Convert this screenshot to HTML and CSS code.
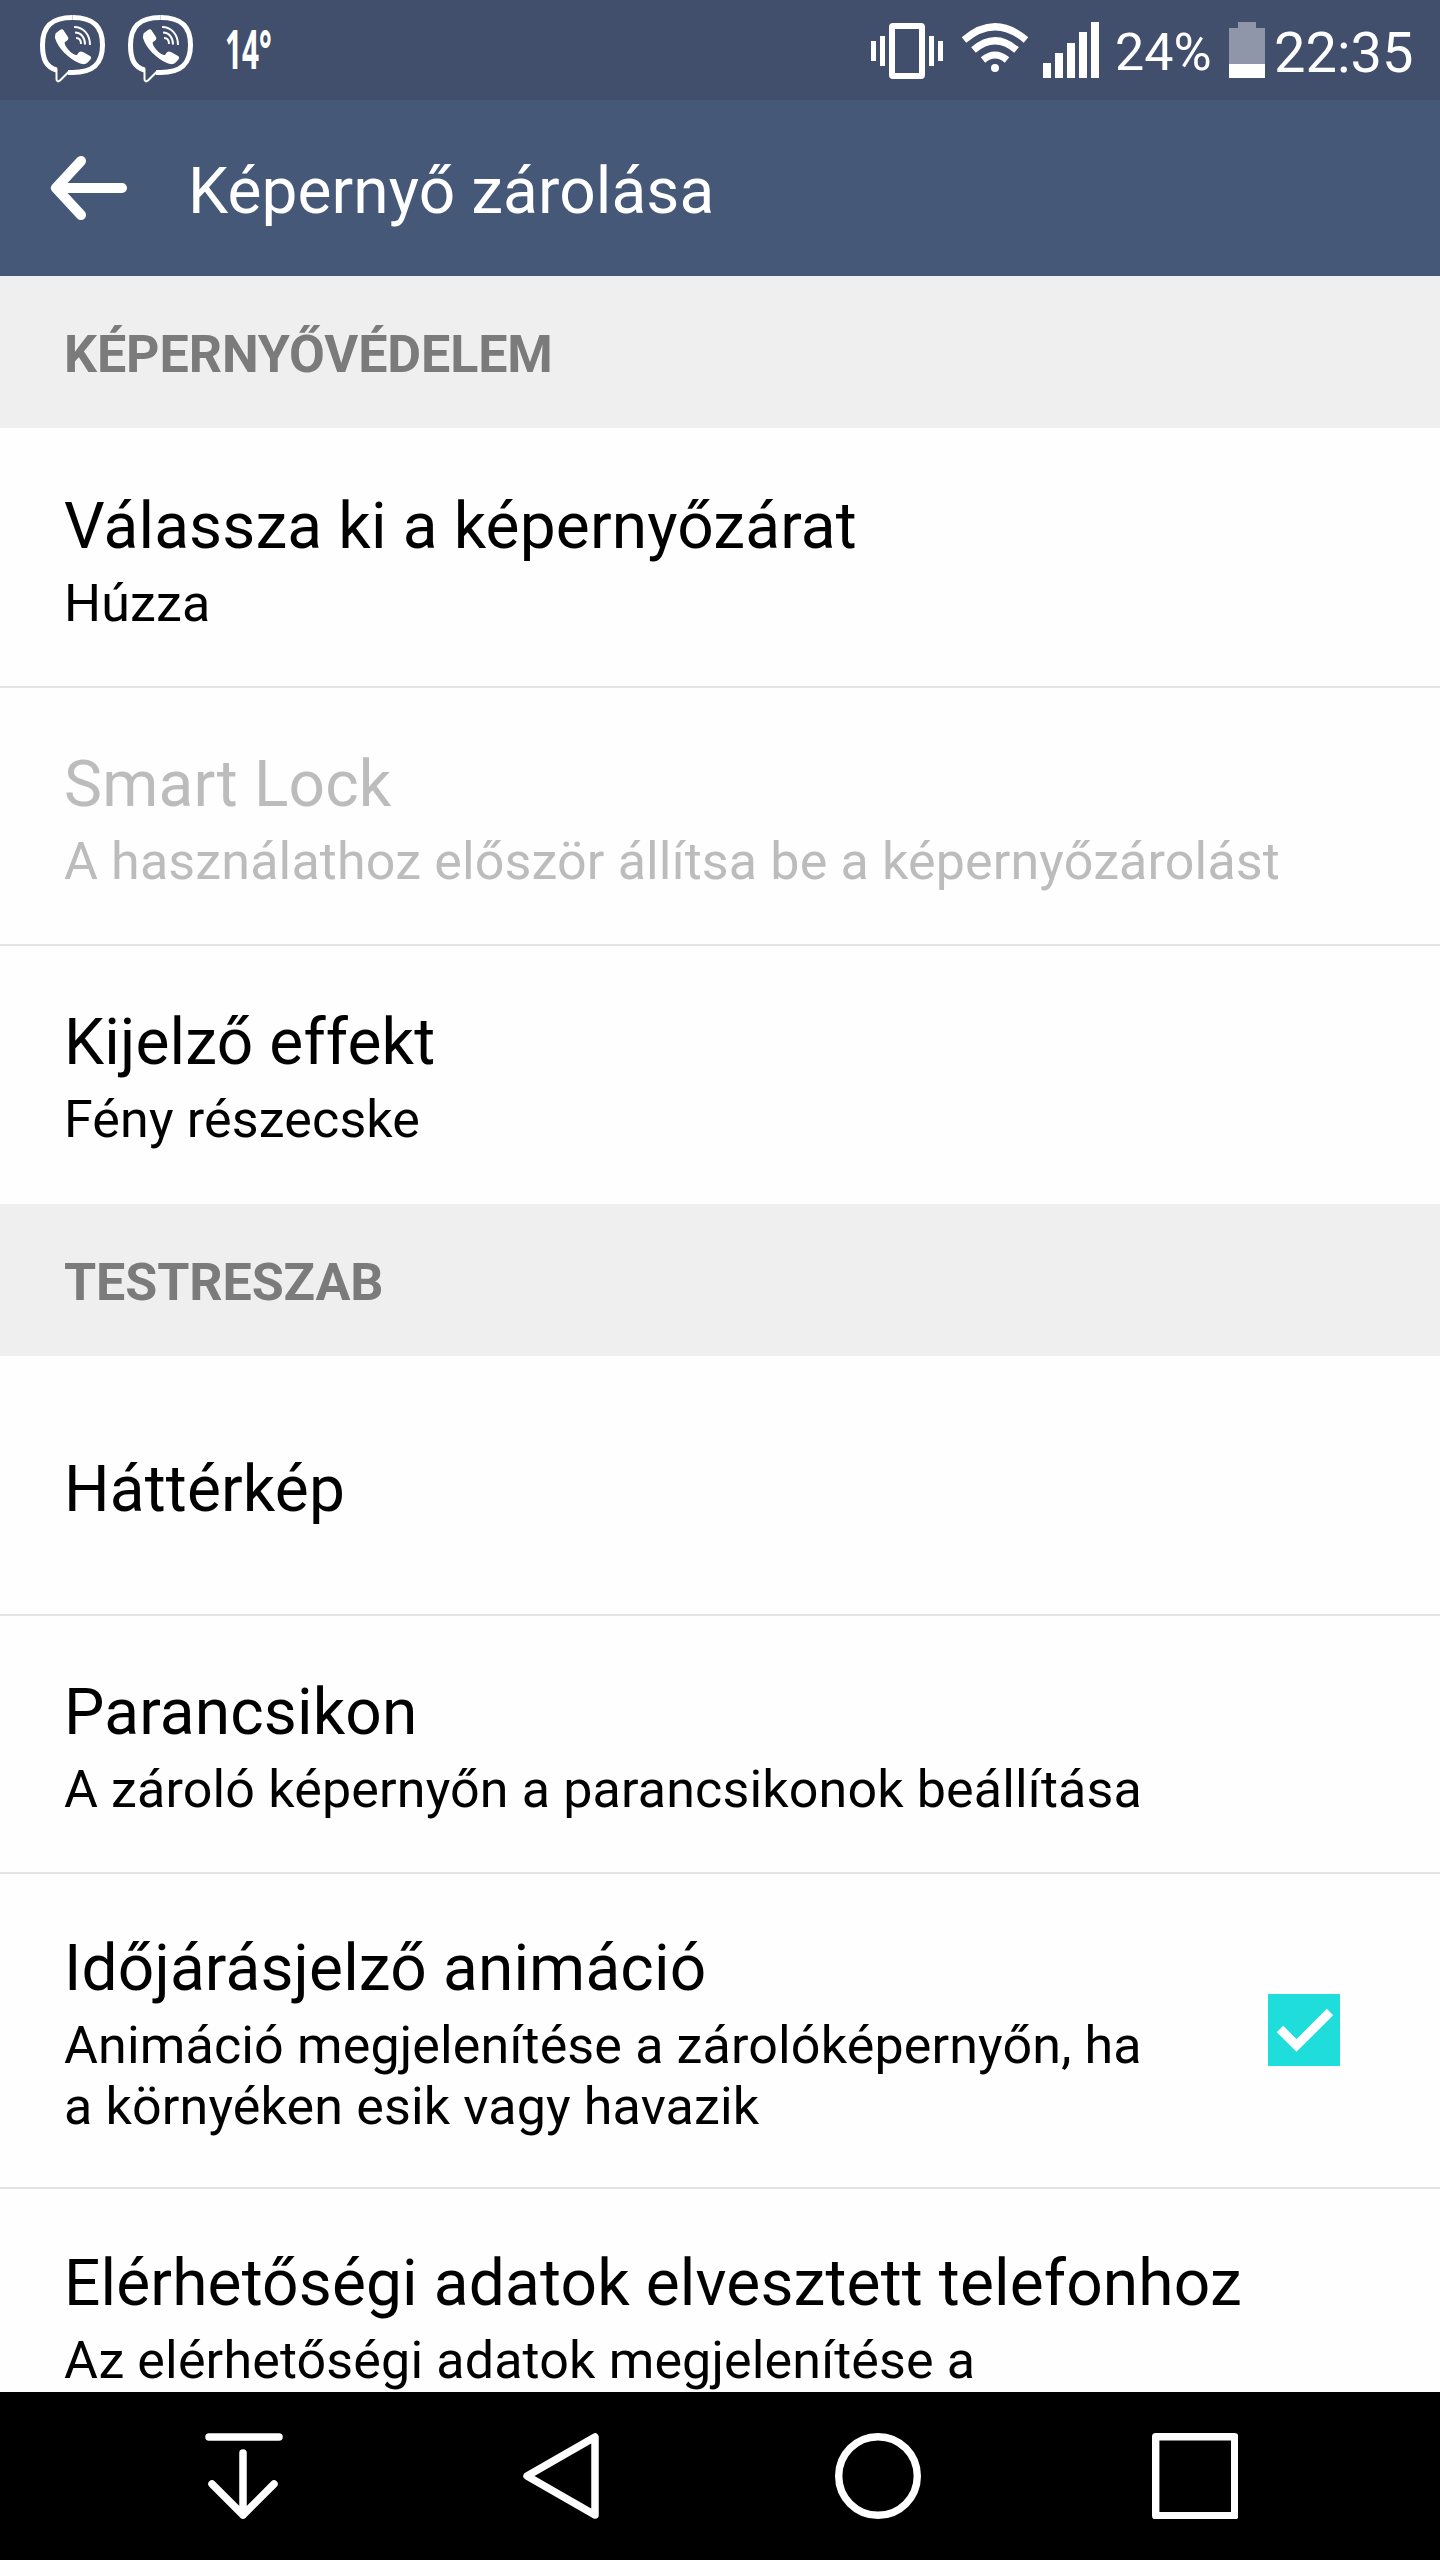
FILE: index.html
```html
<!DOCTYPE html>
<html lang="hu">
<head>
  <meta charset="UTF-8">
  <meta name="viewport" content="width=device-width, initial-scale=1.0">
  <title>Képernyő zárolása</title>
  <link rel="stylesheet" href="styles.css">
</head>
<body>

<svg class="defs">
  <symbol id="viber" viewBox="0 0 68 70">
    <path d="M33.500 2.500C13 2.500 3.500 11 3.500 30c0 15 4 22 14 25" fill="none" stroke="#fff" stroke-width="5"/>
    <path d="M33.500 2.500C54 2.500 63.500 11 63.500 30S54 57.500 33.500 57.500H29" fill="none" stroke="#fff" stroke-width="5"/>
    <path d="M17.500 54v10c0 3 2 3 4 1l9-9" fill="none" stroke="#fff" stroke-width="2" stroke-linecap="round"/>
    <path d="M17 18l4-3c2-1 3-1 4 1l4 6c1 2 0 3-3 5-2 2 6 13 12 13 2-4 4-4 6-3l7 4c2 1 1 3 0 4l-3 3c-3 2-5 1-8 0C29 43 19 33 16 23c0-2 0-4 1-5z" fill="#fff"/>
    <path d="M35 12c9 0 16 7 16 18M36 17.500c6 0 10 5 10 12M37 23c3 0 5 2 5 6" fill="none" stroke="#fff" stroke-width="2"/>
  </symbol>
</svg>

<header>
  <div class="status-bar">
    <svg class="viber"><use href="#viber"/></svg>
    <svg class="viber"><use href="#viber"/></svg>
    <span class="temperature">14°</span>
    <svg class="vibrate" width="74" height="60" viewBox="0 0 74 60">
      <path d="M3.500 20v20M12.500 15v30M61.500 15v30M70.500 20v20" stroke="#fff" stroke-width="5"/>
      <rect x="22" y="5" width="30" height="50" rx="1" fill="none" stroke="#fff" stroke-width="6"/>
    </svg>
    <svg class="wifi" width="68" height="50" viewBox="0 0 68 50">
      <path d="M3 17Q34-9.500 65 17M12.500 27Q34 8.500 55.500 27M22 37Q34 27 46 37" fill="none" stroke="#fff" stroke-width="7"/>
      <circle cx="34" cy="45" r="4" fill="#fff"/>
    </svg>
    <svg class="signal" width="56" height="56" viewBox="0 0 56 56">
      <path d="M0 41h8v15H0zM12 31h8v25h-8zM24 21h8v35h-8zM36 10h8v46h-8zM48 0h8v56h-8z" fill="#fff"/>
    </svg>
    <span class="percent">24%</span>
    <svg class="battery" width="36" height="56" viewBox="0 0 36 56">
      <path d="M9 0h18v6h9v36H0V6h9z" fill="#8f96aa"/>
      <path d="M0 42h36v14H0z" fill="#fff"/>
    </svg>
    <span class="clock">22:35</span>
  </div>
  <div class="title-bar">
    <svg width="78" height="66" viewBox="0 0 78 66">
      <path d="M72 33H6M31 6L6 33l25 27" fill="none" stroke="#fff" stroke-width="10" stroke-linecap="round" stroke-linejoin="round"/>
    </svg>
    <h1>Képernyő zárolása</h1>
  </div>
</header>

<main>
  <h2>KÉPERNYŐVÉDELEM</h2>
  <section class="group">
    <div class="row first">
      <h3>Válassza ki a képernyőzárat</h3>
      <p>Húzza</p>
    </div>
    <div class="row disabled">
      <h3>Smart Lock</h3>
      <p>A használathoz először állítsa be a képernyőzárolást</p>
    </div>
    <div class="row">
      <h3>Kijelző effekt</h3>
      <p>Fény részecske</p>
    </div>
  </section>

  <h2>TESTRESZAB</h2>
  <section class="group">
    <div class="row first single">
      <h3>Háttérkép</h3>
    </div>
    <div class="row">
      <h3>Parancsikon</h3>
      <p>A zároló képernyőn a parancsikonok beállítása</p>
    </div>
    <div class="row with-check">
      <div class="text">
        <h3>Időjárásjelző animáció</h3>
        <p>Animáció megjelenítése a zárolóképernyőn, ha a környéken esik vagy havazik</p>
      </div>
      <svg class="check" width="72" height="72" viewBox="0 0 72 72">
        <rect width="72" height="72" fill="#1edddb"/>
        <path d="M12 35l16.500 16.500L62 18" fill="none" stroke="#fff" stroke-width="9"/>
      </svg>
    </div>
    <div class="row last">
      <h3>Elérhetőségi adatok elvesztett telefonhoz</h3>
      <p>Az elérhetőségi adatok megjelenítése a</p>
    </div>
  </section>
</main>

<nav>
  <svg width="78" height="86" viewBox="0 0 78 86">
    <path d="M4 4h70M38 20v62M7 51l31 31 31-31" fill="none" stroke="#fff" stroke-width="7.500" stroke-linecap="round" stroke-linejoin="round"/>
  </svg>
  <svg width="76" height="86" viewBox="0 0 76 86">
    <path d="M72 4v78L4 43z" fill="none" stroke="#fff" stroke-width="7.500" stroke-linejoin="round"/>
  </svg>
  <svg width="86" height="86" viewBox="0 0 86 86">
    <circle cx="43" cy="43" r="39.300" fill="none" stroke="#fff" stroke-width="7.400"/>
  </svg>
  <svg width="86" height="86" viewBox="0 0 86 86">
    <rect x="3.700" y="3.700" width="79" height="79" fill="none" stroke="#fff" stroke-width="7.400" stroke-linejoin="round"/>
  </svg>
</nav>

</body>
</html>
```

FILE: styles.css
```css
* {
  box-sizing: border-box;
}
body {
  font-family: Roboto, sans-serif;
  margin: 0;
  height: 2560px;
  display: flex;
  flex-direction: column;
  overflow: hidden;
  background-color: #fefefe;
  color: #000;
}
h1, h2, h3, p {
  margin: 0;
  font-weight: 400;
}
svg {
  flex: none;
}
.defs {
  display: none;
}
header {
  color: #fff;
}
.status-bar {
  height: 100px;
  display: flex;
  align-items: flex-start;
  background-color: #414f6c;
  white-space: nowrap;
}
.viber {
  width: 68px;
  height: 70px;
  margin: 15px 0 0 39px;
}
.viber + .viber {
  margin-left: 20px;
}
.temperature {
  font-family: "Open Sans", sans-serif;
  font-size: 53px;
  font-weight: 700;
  line-height: 60px;
  width: 65px;
  margin: 19px 0 0 30px;
  transform: scaleX(0.56);
  transform-origin: left;
}
.vibrate {
  margin: 21px 0 0 auto;
}
.wifi {
  margin: 23px 0 0 17px;
}
.signal {
  margin: 22px 0 0 14px;
}
.percent {
  width: 95px;
  font-size: 52px;
  line-height: 60px;
  margin: 23px 0 0 16px;
}
.battery {
  margin: 22px 0 0 19px;
}
.clock {
  width: 139px;
  font-size: 56px;
  line-height: 66px;
  margin: 20px 27px 0 9px;
}
.title-bar {
  height: 176px;
  display: flex;
  align-items: center;
  padding: 0 0 0 50px;
  background-color: #465877;
}
.title-bar h1 {
  font-size: 64px;
  letter-spacing: 0.1px;
  margin: 6px 0 0 60px;
}
main {
  flex: 1;
  min-height: 0;
  overflow: hidden;
}
h2 {
  height: 152px;
  padding: 6px 64px 0;
  font-size: 52px;
  font-weight: 700;
  line-height: 146px;
  letter-spacing: -0.1px;
  color: #7b7b7b;
  background-color: #efefef;
}
.row {
  height: 258px;
  padding: 59px 64px 0;
  border-bottom: 2px solid #e4e4e4;
}
.row.first {
  height: 260px;
  padding-top: 61px;
}
.row:last-child {
  border-bottom: none;
}
.row.single {
  padding-top: 96px;
}
h3 {
  font-size: 64px;
  line-height: 75px;
  letter-spacing: 0.15px;
  white-space: nowrap;
}
.row p {
  font-size: 52px;
  line-height: 61px;
  letter-spacing: 0.15px;
  margin-top: 9px;
}
.disabled {
  color: #bcbcbc;
}
.row.with-check {
  height: 315px;
  display: flex;
  justify-content: space-between;
  padding-top: 57px;
  padding-right: 100px;
}
.with-check .text {
  width: 1100px;
}
.check {
  margin-top: 63px;
}
.row.last {
  padding-top: 57px;
}
nav {
  height: 168px;
  display: flex;
  align-items: flex-start;
  padding: 41px 0 0 205px;
  background-color: #000;
}
nav svg:nth-child(2) {
  margin-left: 240px;
}
nav svg:nth-child(3) {
  margin-left: 236px;
}
nav svg:nth-child(4) {
  margin-left: 231px;
}
```
